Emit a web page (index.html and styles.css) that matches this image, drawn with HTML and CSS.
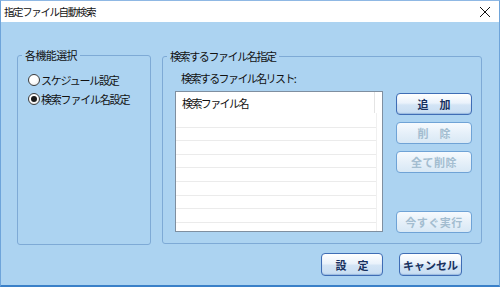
FILE: index.html
```html
<!DOCTYPE html>
<html lang="ja">

<head>
    <meta charset="UTF-8">
    <meta name="viewport" content="width=device-width, initial-scale=1.0">
    <title>指定ファイル自動検索</title>
    <link rel="stylesheet" href="styles.css">
</head>

<body>
    <div class="window">
        <div class="titlebar">
            <span class="title">指定ファイル自動検索</span>
            <svg class="close" width="12" height="12" viewBox="0 0 12 12">
                <path d="M1 1 L11 11 M11 1 L1 11" stroke="#111" stroke-width="1" fill="none"/>
            </svg>
        </div>
        <div class="content">
            <div class="groups">
                <fieldset class="group group-left">
                    <legend>各機能選択</legend>
                    <div class="radios">
                        <label class="radio"><span class="dot"></span>スケジュール設定</label>
                        <label class="radio"><span class="dot checked"></span>検索ファイル名設定</label>
                    </div>
                </fieldset>
                <fieldset class="group group-right">
                    <legend>検索するファイル名指定</legend>
                    <div class="file-grid">
                        <div class="list-label">検索するファイル名リスト:</div>
                        <div class="listbox">
                            <div class="list-item">検索ファイル名</div>
                            <div class="list-lines"></div>
                        </div>
                        <div class="btn-col">
                            <button class="btn wide">追　加</button>
                            <button class="btn wide disabled">削　除</button>
                            <button class="btn disabled">全て削除</button>
                            <button class="btn disabled run">今すぐ実行</button>
                        </div>
                    </div>
                </fieldset>
            </div>
            <div class="footer">
                <button class="btn wide btn-ok">設　定</button>
                <button class="btn btn-cancel">キャンセル</button>
            </div>
        </div>
    </div>
</body>

</html>
```

FILE: styles.css
```css
* {
    margin: 0;
    padding: 0;
    box-sizing: border-box;
}

body {
    width: 500px;
    height: 287px;
    font-family: "Noto Sans CJK JP", "Noto Sans", sans-serif;
    font-size: 11px;
    line-height: 14px;
    color: #111;
    overflow: hidden;
}

.window {
    width: 500px;
    height: 287px;
    border: 1px solid #6ea4da;
    border-top-color: #8fb8e4;
    border-bottom: 2px solid #3a80c8;
    background-color: #acd3f1;
    display: flex;
    flex-direction: column;
}

.titlebar {
    height: 21px;
    background-color: #fff;
    display: flex;
    align-items: center;
    justify-content: space-between;
    padding: 0 8px 0 3px;
}

.title {
    font-size: 10.5px;
    letter-spacing: -1.4px;
}

.close {
    display: block;
}

.content {
    flex: 1;
    padding: 26px 0 0 16px;
}

.groups {
    display: flex;
    gap: 11px;
    height: 197px;
}

.group {
    border: 1px solid #7eaad6;
    border-radius: 3px;
}

.group legend {
    margin-left: 4px;
    padding: 0 3px;
    line-height: 14px;
    letter-spacing: -0.6px;
}

.group-left {
    width: 134px;
    padding: 0;
}

.radios {
    display: flex;
    flex-direction: column;
    gap: 3px;
    padding: 10px 0 0 10px;
}

.radio {
    display: flex;
    align-items: center;
    height: 16px;
    line-height: 16px;
    gap: 1px;
    letter-spacing: -1.2px;
}

.dot {
    flex: none;
    width: 12px;
    height: 12px;
    border-radius: 50%;
    border: 1px solid #3c3c3c;
    background: radial-gradient(circle at 40% 35%, #fff 40%, #e4e4e4);
    display: flex;
    align-items: center;
    justify-content: center;
}

.dot.checked::after {
    content: "";
    width: 6px;
    height: 6px;
    border-radius: 50%;
    background-color: #1a1a1a;
}

.group-right {
    width: 320px;
    height: 195px;
    margin-top: 1px;
    padding: 0;
}

.group-right legend {
    letter-spacing: -1.4px;
}

.file-grid {
    display: grid;
    grid-template-columns: 208px 76px;
    grid-template-rows: auto 141px;
    column-gap: 13px;
    padding: 8px 0 0 12px;
}

.list-label {
    grid-column: 1 / 3;
    margin: 0 0 6px 6px;
    letter-spacing: -1.6px;
}

.listbox {
    border: 1px solid #7f8fa0;
    background-color: #fff;
    display: flex;
    flex-direction: column;
}

.list-item {
    height: 21px;
    padding: 4px 0 0 6px;
    letter-spacing: -1.6px;
    margin-right: 7px;
    border-right: 1px solid #e4e4e4;
}

.list-lines {
    flex: 1;
    margin-right: 5px;
    border-right: 1px solid #f0f0f0;
    background: repeating-linear-gradient(to bottom, transparent 0, transparent 12.6px, #ebebeb 12.6px, #ebebeb 13.6px);
    background-position: 0 1px;
}

.btn-col {
    display: flex;
    flex-direction: column;
    gap: 7px;
    padding-top: 2px;
    height: 142px;
}

.btn {
    width: 76px;
    height: 22px;
    border: 1px solid #3f6db5;
    border-radius: 4px;
    background: linear-gradient(to bottom, #ffffff 0%, #eaf2fb 45%, #d3e4f5 55%, #c7ddf2 100%);
    box-shadow: inset 0 -1px 1px rgba(70, 120, 190, .35);
    font-family: "Noto Sans CJK JP", "Noto Sans", sans-serif;
    font-size: 11px;
    font-weight: bold;
    color: #17305e;
    letter-spacing: 0.5px;
    white-space: pre;
}

.btn.wide {
    letter-spacing: 0;
}

.btn.disabled {
    border-color: #6fa3d6;
    color: #a3bdd0;
    background: linear-gradient(to bottom, #f6fafe 0%, #e6f0f9 50%, #d8e8f5 100%);
    box-shadow: none;
}

.btn.run {
    margin-top: auto;
}

.footer {
    display: flex;
    justify-content: flex-end;
    gap: 16px;
    padding: 8px 37px 0 0;
}

.btn-ok {
    width: 62px;
    height: 23px;
}

.btn-cancel {
    width: 63px;
    height: 23px;
    letter-spacing: 0;
}
```
